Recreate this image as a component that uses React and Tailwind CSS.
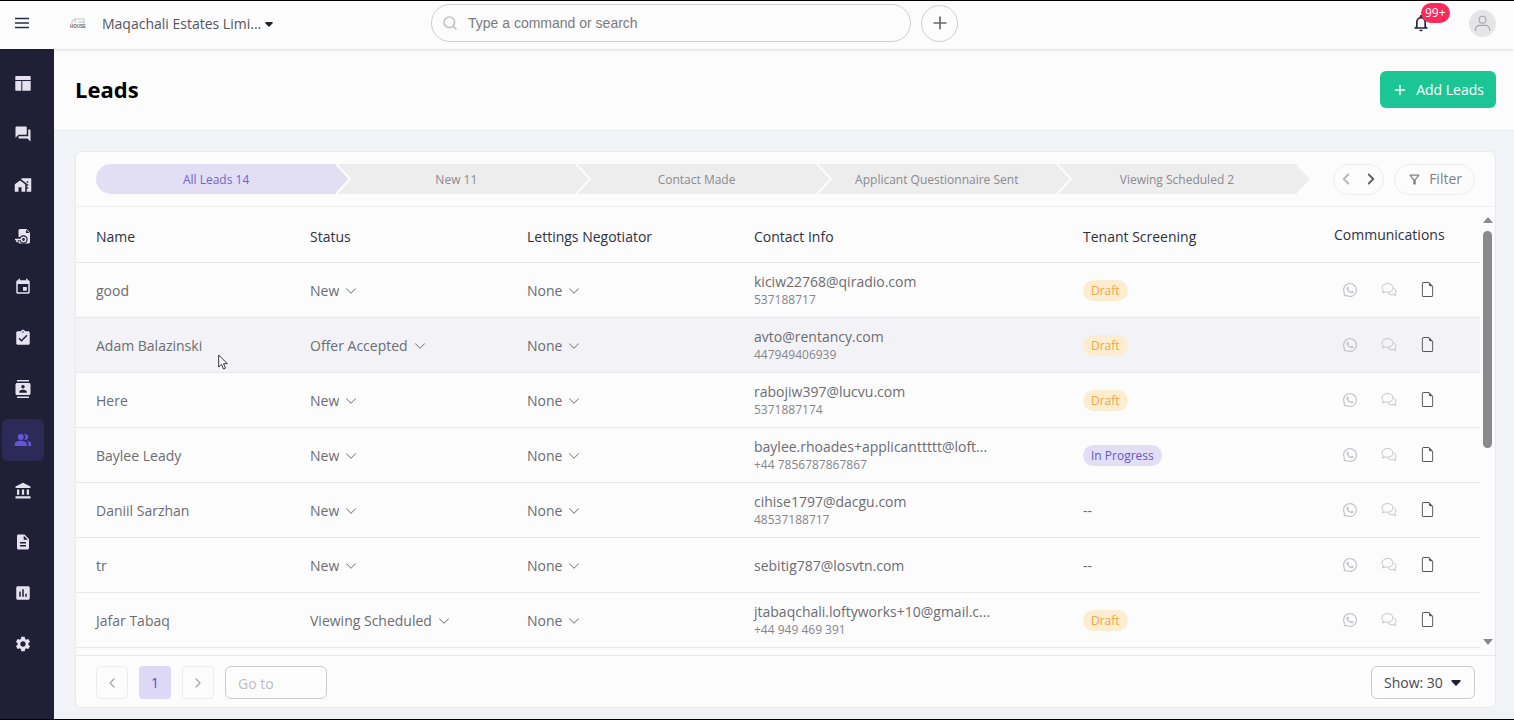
import { useState } from "react";
import { AiOutlineWhatsApp } from "react-icons/ai";
import { BsChevronDown, BsFileEarmark } from "react-icons/bs";
import {
  MdAccountBalance,
  MdAssessment,
  MdAssignmentTurnedIn,
  MdContacts,
  MdDescription,
  MdEvent,
  MdForum,
  MdHomeWork,
  MdNotificationsNone,
  MdOutlineFilterAlt,
  MdPeopleAlt,
  MdSettings,
} from "react-icons/md";
import { ChevronLeft, ChevronRight, Plus, Search } from "lucide-react";

const LayoutIcon = ({ className }) => (
  <svg className={className} viewBox="0 0 18 18" fill="currentColor">
    <path d="M2 2h14a.7.7 0 0 1 .7.7V6H1.300V2.700A.7.7 0 0 1 2 2zM1.300 7h6v9.700H2a.7.7 0 0 1-.7-.7zM8.300 7h8.400v9a.7.7 0 0 1-.7.7H8.300z" />
  </svg>
);

const LeaseIcon = ({ className }) => (
  <svg className={className} viewBox="0 0 18 18" fill="none">
    <path d="M6 2h6.500L16 5.500V15a1.500 1.500 0 0 1-1.500 1.500H6A1.500 1.500 0 0 1 4.500 15V3.500A1.500 1.500 0 0 1 6 2z" fill="currentColor" />
    <path d="M12 2.800V6h3.500z" fill="#1f2035" />
    <g stroke="#1f2035" strokeWidth="4">
      <circle cx="9.500" cy="12.500" r="2.200" />
      <path d="M7.500 12H1" />
    </g>
    <g stroke="currentColor" strokeWidth="1.600">
      <circle cx="9.500" cy="12.500" r="2.200" />
      <path d="M7.300 12.500H1M3 12.500v2.700" />
    </g>
  </svg>
);

const MenuIcon = ({ className }) => (
  <svg className={className} viewBox="0 0 16 12" stroke="currentColor" strokeWidth="1.500">
    <path d="M1 1.500h14M1 6h14M1 10.500h14" />
  </svg>
);

const BubblesIcon = ({ className }) => (
  <svg className={className} viewBox="0 0 16 16" fill="none" stroke="currentColor" strokeLinejoin="round">
    <path d="M6.500 1.500c3.200 0 5.500 1.900 5.500 4.400s-2.300 4.400-5.500 4.400c-.8 0-1.500-.1-2.200-.4L1.500 11l.9-2.200C1.500 8 1 7 1 5.900c0-2.500 2.300-4.400 5.500-4.400z" />
    <path d="M13 6.200c1.300.7 2 1.700 2 2.900 0 .9-.4 1.700-1.100 2.300l.7 2.200-2.400-1c-2.100.5-4.100-.1-5.100-1.500" />
  </svg>
);

const PersonIcon = ({ className }) => (
  <svg className={className} viewBox="0 0 20 20" fill="none" stroke="currentColor" strokeWidth="1.200">
    <circle cx="10" cy="6" r="3.600" />
    <path d="M2.500 18v-1.500a4.500 4.500 0 0 1 4.500-4.500h6a4.500 4.500 0 0 1 4.500 4.500V18" />
  </svg>
);

const Caret = ({ className }) => (
  <svg className={className} viewBox="0 0 10 6" fill="currentColor">
    <path d="M1 0h8a.8.8 0 0 1 .6 1.300L5.600 5.600a.8.8 0 0 1-1.200 0L.4 1.300A.8.8 0 0 1 1 0z" />
  </svg>
);

const navItems = [
  { label: "Dashboard", icon: LayoutIcon },
  { label: "Messages", icon: MdForum },
  { label: "Properties", icon: MdHomeWork },
  { label: "Tenancies", icon: LeaseIcon },
  { label: "Calendar", icon: MdEvent },
  { label: "Tasks", icon: MdAssignmentTurnedIn },
  { label: "Contacts", icon: MdContacts },
  { label: "Leads", icon: MdPeopleAlt, active: true },
  { label: "Accounting", icon: MdAccountBalance },
  { label: "Documents", icon: MdDescription },
  { label: "Reports", icon: MdAssessment },
  { label: "Settings", icon: MdSettings },
];

const stages = ["All Leads 14", "New 11", "Contact Made", "Applicant Questionnaire Sent", "Viewing Scheduled 2"];

const leads = [
  { name: "good", status: "New", email: "kiciw22768@qiradio.com", phone: "537188717", screening: "Draft" },
  { name: "Adam Balazinski", status: "Offer Accepted", email: "avto@rentancy.com", phone: "447949406939", screening: "Draft", hovered: true },
  { name: "Here", status: "New", email: "rabojiw397@lucvu.com", phone: "5371887174", screening: "Draft" },
  { name: "Baylee Leady", status: "New", email: "baylee.rhoades+applicanttttt@loft...", phone: "+44 7856787867867", screening: "In Progress" },
  { name: "Daniil Sarzhan", status: "New", email: "cihise1797@dacgu.com", phone: "48537188717", screening: "--" },
  { name: "tr", status: "New", email: "sebitig787@losvtn.com", phone: "", screening: "--" },
  { name: "Jafar Tabaq", status: "Viewing Scheduled", email: "jtabaqchali.loftyworks+10@gmail.c...", phone: "+44 949 469 391", screening: "Draft" },
];

function TopBar() {
  return (
    <header className="relative z-10 flex h-12 shrink-0 items-center bg-[#fcfcfd] pb-1 pl-3.5 pr-[18px] shadow-[0_1px_3px_rgba(0,0,0,0.12)]">
      <div className="flex w-[417px] shrink-0 items-center">
        <button aria-label="Toggle menu" className="text-[#2c2b45]">
          <MenuIcon className="h-3 w-4" />
        </button>
        <svg className="ml-10 h-4 w-4" viewBox="0 0 16 16" aria-hidden="true">
          <path d="M2 9V6l3-2h9v5M5 4v4M8 7h6" fill="none" stroke="#b4b4b8" strokeWidth="0.8" />
          <text x="8" y="13" textAnchor="middle" fontSize="4.500" fontWeight="700" fill="#66666c" fontFamily="Liberation Sans, sans-serif">HOUSE</text>
        </svg>
        <div className="ml-4 flex items-center pt-0.5">
          <select aria-label="Company" className="field-sizing-content appearance-none bg-transparent pr-4 text-sm text-[#55555e] outline-none">
            <option>Maqachali Estates Limi...</option>
          </select>
          <Caret className="pointer-events-none -ml-3 h-[5px] w-2 text-[#22222e]" />
        </div>
      </div>

      <div className="flex items-center gap-2.5">
        <label className="flex h-[38px] w-[480px] items-center rounded-full border border-[#cfcfd2] pl-2.5">
          <Search className="size-4 text-[#c4c4c8]" strokeWidth={2.5} />
          <input
            type="text"
            aria-label="Search"
            placeholder="Type a command or search"
            className="ml-2.5 flex-1 bg-transparent font-['Liberation_Sans',sans-serif] text-sm outline-none placeholder:text-[#7b7b7f]"
          />
        </label>
        <button aria-label="Create" className="flex size-[37px] items-center justify-center rounded-full border border-[#cfcfd2] text-[#66666b]">
          <Plus className="size-5" strokeWidth={2} />
        </button>
      </div>

      <div className="ml-auto flex items-center gap-[38px]">
        <button aria-label="Notifications" className="relative text-[#26253d]">
          <MdNotificationsNone className="size-5" />
          <span className="absolute -top-2.5 left-2.5 rounded-full bg-[#fa2a5c] px-1 text-xs leading-5 text-white">99+</span>
        </button>
        <button aria-label="Account" className="flex size-[27px] items-center justify-center rounded-full bg-[#e5e5e8] text-[#a6a6ab]">
          <PersonIcon className="size-[19px]" />
        </button>
      </div>
    </header>
  );
}

function Sidebar() {
  return (
    <nav className="flex w-[54px] shrink-0 flex-col gap-[9px] bg-[#1f2035] pl-0.5 pt-[13px]">
      {navItems.map(({ label, icon: Icon, active }) => (
        <a
          key={label}
          href="#"
          aria-label={label}
          className={`flex size-[42px] items-center justify-center rounded-md ${active ? "bg-[#2c2a57] text-[#6554e0]" : "text-[#e4e2ee]"}`}
        >
          <Icon className="size-[18px]" />
        </a>
      ))}
    </nav>
  );
}

function StageBar({ active, onSelect }) {
  return (
    <div className="flex h-[55px] items-center border-b border-[#f0f0f2] px-5">
      <div className="mr-9 flex flex-1">
        {stages.map((stage, i) => (
          <button
            key={stage}
            onClick={() => onSelect(i)}
            className={`relative h-[30px] flex-1 pt-0.5 text-xs ${i === 0 ? "rounded-l-full" : ""} ${active === i ? "bg-[#e2dff5] text-[#7561cc]" : "bg-[#ededee] text-[#8a8a8f]"}`}
          >
            {stage}
            <svg
              className={`absolute left-full top-0 z-10 h-[30px] w-4 ${active === i ? "text-[#e2dff5]" : "text-[#ededee]"}`}
              viewBox="0 0 16 30"
              fill="none"
            >
              <path d="M0 0l14 15L0 30z" fill="currentColor" />
              <path d="M0 0l14 15L0 30" stroke="#fcfcfd" strokeWidth="2" />
            </svg>
          </button>
        ))}
      </div>
      <div className="flex h-[31px] items-center gap-[7px] rounded-full border border-[#ededef] px-[3px]">
        <button aria-label="Previous stages" className="text-[#b8b8bc]">
          <ChevronLeft className="size-[18px]" strokeWidth={2.5} />
        </button>
        <button aria-label="Next stages" className="text-[#626267]">
          <ChevronRight className="size-[18px]" strokeWidth={2.5} />
        </button>
      </div>
      <button className="ml-2.5 flex h-[31px] items-center gap-[7px] rounded-full border border-[#ededef] px-3 text-sm text-[#808085]">
        <MdOutlineFilterAlt className="size-[15px]" />
        Filter
      </button>
    </div>
  );
}

function InlineSelect({ label, value }) {
  return (
    <div className="flex items-center">
      <select aria-label={label} className="field-sizing-content appearance-none bg-transparent pr-5 outline-none">
        <option>{value}</option>
      </select>
      <BsChevronDown className="pointer-events-none -ml-3.5 size-3" />
    </div>
  );
}

function Screening({ value }) {
  if (value === "--") return <span>--</span>;
  return (
    <span
      className={`inline-block rounded-full px-2 text-xs leading-[21px] ${value === "Draft" ? "bg-[#fdedd0] text-[#f0a544]" : "bg-[#e2def6] text-[#6a55c8]"}`}
    >
      {value}
    </span>
  );
}

function LeadsTable() {
  return (
    <table className="w-full table-fixed text-left text-sm text-[#6c6c71]">
      <colgroup>
        <col className="w-[214px]" />
        <col className="w-[217px]" />
        <col className="w-[227px]" />
        <col className="w-[329px]" />
        <col className="w-[251px]" />
        <col />
      </colgroup>
      <thead>
        <tr className="h-[55px] border-b border-[#e8e8ea] text-[#30303e]">
          <th className="pl-5 pt-1.5 font-medium">Name</th>
          <th className="pl-5 pt-1.5 font-medium">Status</th>
          <th className="pl-5 pt-1.5 font-medium">Lettings Negotiator</th>
          <th className="pl-5 pt-1.5 font-medium">Contact Info</th>
          <th className="pl-5 pt-1.5 font-medium">Tenant Screening</th>
          <th className="pl-5 pt-0.5 font-medium">Communications</th>
        </tr>
      </thead>
      <tbody>
        {leads.map((lead) => (
          <tr key={lead.name} className={`h-[55px] border-b border-[#e8e8ea] ${lead.hovered ? "bg-[#f3f3f7]" : ""}`}>
            <td className="pl-5 pt-0.5">{lead.name}</td>
            <td className="pl-5 pt-0.5">
              <InlineSelect label="Status" value={lead.status} />
            </td>
            <td className="pl-5 pt-0.5">
              <InlineSelect label="Lettings negotiator" value="None" />
            </td>
            <td className="pl-5 pt-0.5">
              <div className="leading-[18px]">{lead.email}</div>
              {lead.phone && <div className="text-xs leading-[17px] text-[#85858a]">{lead.phone}</div>}
            </td>
            <td className="pl-5 pt-0.5">
              <Screening value={lead.screening} />
            </td>
            <td className="pl-7">
              <div className="flex items-center gap-[23px] text-[#c4c4c8]">
                <button aria-label="WhatsApp">
                  <AiOutlineWhatsApp className="size-4" />
                </button>
                <button aria-label="Chat">
                  <BubblesIcon className="size-4" />
                </button>
                <button aria-label="Notes" className="text-[#55555a]">
                  <BsFileEarmark className="size-[15px]" />
                </button>
              </div>
            </td>
          </tr>
        ))}
      </tbody>
    </table>
  );
}

function Pagination() {
  return (
    <footer className="flex h-[52px] shrink-0 items-center gap-[11px] border-t border-[#e8e8ea] px-5 pt-0.5">
      <button aria-label="Previous page" className="flex h-[33px] w-8 items-center justify-center rounded border border-[#ededef] text-[#a9a9ad]">
        <ChevronLeft className="size-4" />
      </button>
      <button className="h-[33px] w-8 rounded bg-[#dcd8f5] text-sm text-[#6249c8]">1</button>
      <button aria-label="Next page" className="flex h-[33px] w-8 items-center justify-center rounded border border-[#ededef] text-[#a9a9ad]">
        <ChevronRight className="size-4" />
      </button>
      <input
        type="text"
        aria-label="Go to page"
        placeholder="Go to"
        className="h-[33px] w-[102px] rounded-md border border-[#cbcbce] bg-transparent px-3 pt-0.5 text-sm outline-none placeholder:text-[#bcbcc0]"
      />
      <div className="ml-auto flex items-center">
        <select aria-label="Rows per page" className="h-[33px] w-[104px] appearance-none rounded-md border border-[#cbcbce] bg-transparent pl-3 text-sm text-[#4a4a52] outline-none">
          <option>Show: 30</option>
        </select>
        <Caret className="pointer-events-none -ml-6 mr-3.5 h-1.5 w-2.5 text-[#22222e]" />
      </div>
    </footer>
  );
}

export default function App() {
  const [activeStage, setActiveStage] = useState(0);

  return (
    <div className="flex h-screen flex-col overflow-hidden border-y border-black bg-[#f2f3f6] font-['Open_Sans',sans-serif]">
      <TopBar />
      <div className="flex min-h-0 flex-1">
        <Sidebar />
        <main className="flex min-w-0 flex-1 flex-col">
          <div className="flex h-[82px] shrink-0 items-center justify-between border-b border-[#e9eaed] bg-[#fcfcfd] pl-[21px] pr-[18px]">
            <h1 className="text-[22px] font-bold text-black">Leads</h1>
            <button className="flex h-[37px] items-center gap-2 rounded-md bg-[#1cc694] px-3 text-sm font-medium text-white">
              <Plus className="size-4" />
              Add Leads
            </button>
          </div>

          <section className="mb-[11px] ml-[21px] mr-[18px] mt-5 flex min-h-0 flex-1 flex-col rounded-md border border-[#e8e9ec] bg-[#fcfcfd]">
            <StageBar active={activeStage} onSelect={setActiveStage} />
            <div className="flex min-h-0 flex-1">
              <div className="min-w-0 flex-1 overflow-hidden">
                <LeadsTable />
              </div>
              <div className="flex w-[15px] flex-col items-center pb-2.5 pt-2.5 text-[#8a8a8a]">
                <svg className="h-1.5 w-2.5" viewBox="0 0 10 6" fill="currentColor">
                  <path d="M5 0l5 6H0z" />
                </svg>
                <div className="mt-2 h-[217px] w-[9px] rounded-full bg-[#8a8a8a]" />
                <svg className="mt-auto h-1.5 w-2.5" viewBox="0 0 10 6" fill="currentColor">
                  <path d="M0 0h10L5 6z" />
                </svg>
              </div>
            </div>
            <Pagination />
          </section>
        </main>
      </div>

      <svg className="pointer-events-none absolute left-[218px] top-[354px] z-20 h-4 w-2.5" viewBox="0 0 10 16">
        <path d="M.7 1v12l2.800-2.600 2 4.600 2-.9-2-4.400h3.800z" fill="#fff" stroke="#33333a" strokeWidth="1" />
      </svg>
    </div>
  );
}
